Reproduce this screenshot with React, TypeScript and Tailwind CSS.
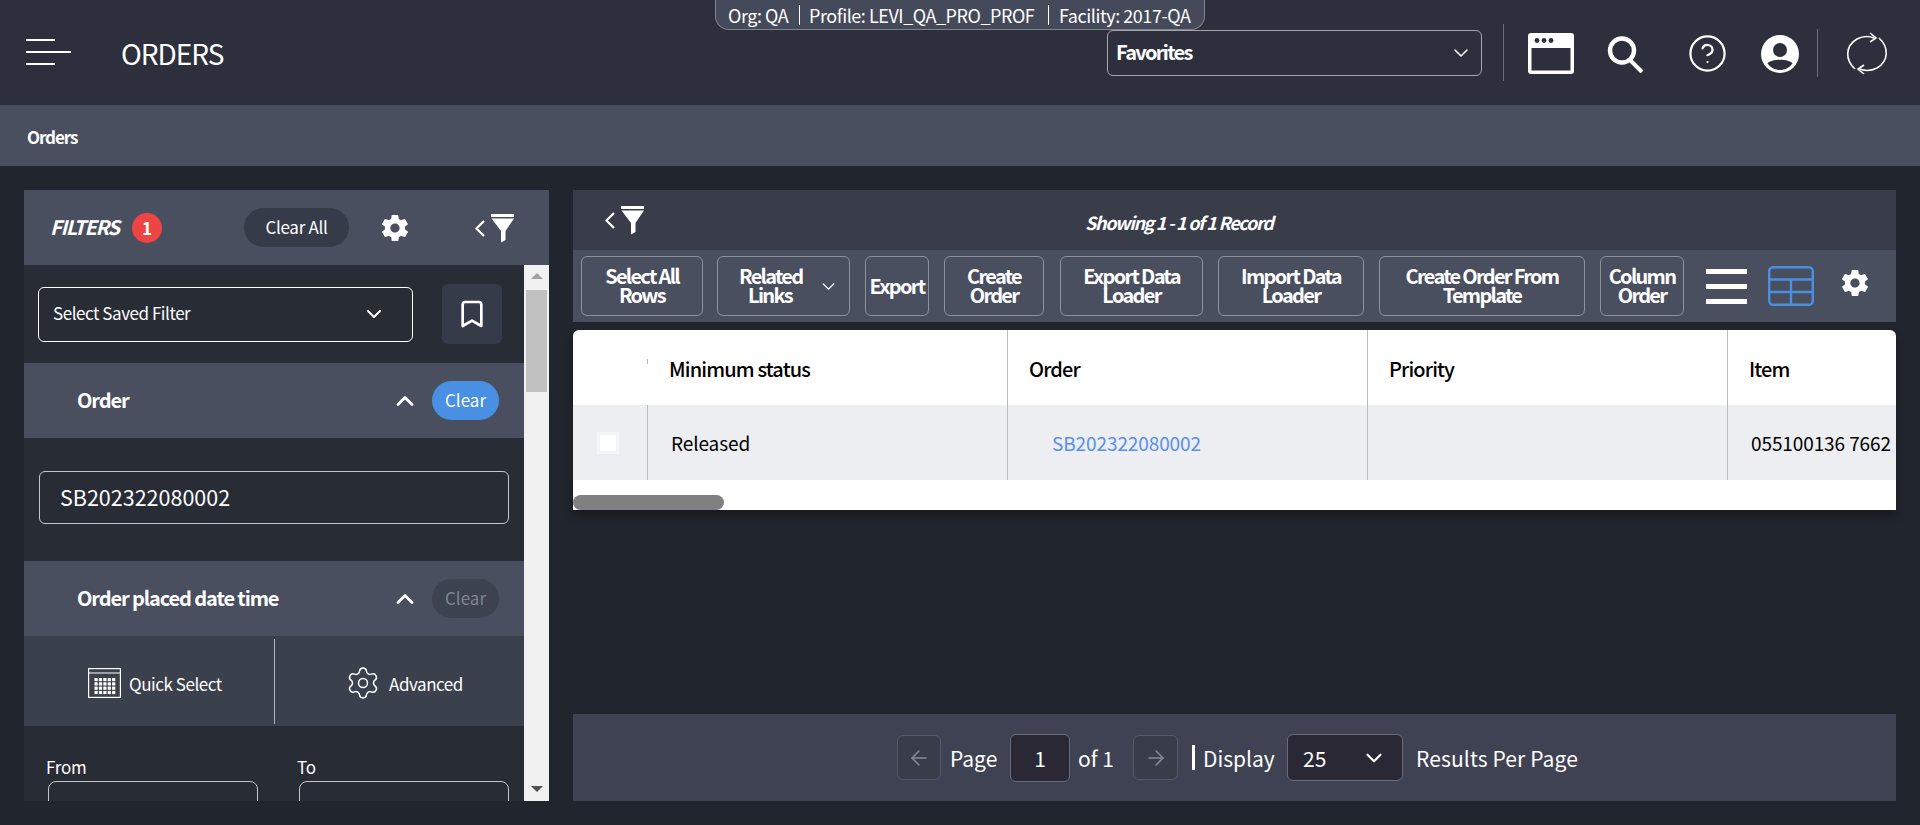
import React from "react";
import { Bookmark, ChevronDown, ChevronUp, ArrowLeft, ArrowRight, Settings, HelpCircle } from "lucide-react";
import { IoMdSettings } from "react-icons/io";

function FilterToggle() {
  return (
    <svg width="42" height="30" viewBox="0 0 42 30" fill="none" className="block">
      <path d="M11 8 L3.5 15.5 L11 23" stroke="white" strokeWidth="2.2" />
      <rect x="18" y="1" width="23" height="3" fill="white" />
      <path d="M18.5 5.5 H41 L32.5 18 V27 L28 29.5 V18 Z" fill="white" />
    </svg>
  );
}

function ToolButton({ w, children }: { w: string; children: React.ReactNode }) {
  return (
    <button className={`${w} h-[60px] shrink-0 rounded-[6px] border border-[#8e929c] bg-[#4a4f60] text-[20px] leading-[19px] font-bold text-white tracking-[-1.7px] flex items-center justify-center text-center pb-[2px]`}>
      <span>{children}</span>
    </button>
  );
}

function SectionHead({ title, active }: { title: string; active?: boolean }) {
  return (
    <div className="h-[75px] bg-[#4a4f5f] flex items-center pl-[53px] pr-[25px] shrink-0">
      <span className="text-[20px] leading-[28px] pb-[2px] font-bold text-white tracking-[-1.1px] flex-1">{title}</span>
      <ChevronUp size={28} strokeWidth={2.4} className="text-white mr-[13px]" />
      <span className={active
        ? "w-[67px] h-[39px] rounded-full bg-[#4a90e2] text-white text-[17px] pb-[2px] flex items-center justify-center"
        : "w-[67px] h-[39px] rounded-full bg-[#3c424f] text-[#7f8591] text-[17px] pb-[2px] flex items-center justify-center"}>
        Clear
      </span>
    </div>
  );
}

function HeaderCell({ w, pl, children, border = true }: { w: string; pl: string; children?: React.ReactNode; border?: boolean }) {
  return (
    <div className={`${w} ${pl} ${border ? "border-r border-[#b9bcc0]" : ""} h-full shrink-0 flex items-center`}>
      {children}
    </div>
  );
}

export default function App() {
  return (
    <div className="relative w-[1920px] h-[825px] overflow-hidden bg-[#21252d] text-white font-['Noto_Sans_CJK_JP','Noto_Sans',sans-serif]">
      <div className="absolute left-[715px] top-0 w-[490px] h-[30px] rounded-b-[14px] bg-[#454a5a] border border-t-0 border-[#80848f] flex items-center pl-[12px] text-[18px] leading-[24px] tracking-[-0.45px] whitespace-nowrap">
        <span className="w-[71px]">Org: QA</span>
        <span className="w-px h-[20px] bg-white" />
        <span className="pl-[9px] w-[248px]">Profile: LEVI_QA_PRO_PROF</span>
        <span className="w-px h-[20px] bg-white" />
        <span className="pl-[10px]">Facility: 2017-QA</span>
      </div>

      <header className="h-[105px] bg-[#2d303c] flex items-start">
        <div className="ml-[26px] mt-[39px] w-[45px] flex flex-col gap-[10px]">
          <div className="w-[29px] h-[2px] bg-white" />
          <div className="w-[45px] h-[2px] bg-white" />
          <div className="w-[29px] h-[2px] bg-white" />
        </div>
        <div className="ml-[50px] mt-[34px] text-[28px] leading-[38px] tracking-[-1px]">ORDERS</div>
        <div className="ml-[auto] mt-[30px] w-[375px] h-[46px] rounded-[6px] border border-[#a3a6ae] flex items-center pl-[8px] pr-[8px]">
          <span className="text-[20px] leading-[28px] pb-[2px] font-bold flex-1 tracking-[-1.7px]">Favorites</span>
          <ChevronDown size={24} strokeWidth={1.5} />
        </div>
        <div className="ml-[21px] mt-[24px] w-px h-[57px] bg-[#6a6e78]" />
        <svg className="ml-[24px] mt-[33px]" width="46" height="41" viewBox="0 0 46 41">
          <rect x="0" y="0" width="46" height="41" rx="3" fill="white" />
          <rect x="3.5" y="15" width="39" height="22.5" fill="#2d303c" />
          <circle cx="9" cy="7.5" r="2.4" fill="#2d303c" />
          <circle cx="16" cy="7.5" r="2.4" fill="#2d303c" />
          <circle cx="23" cy="7.5" r="2.4" fill="#2d303c" />
        </svg>
        <svg className="ml-[33px] mt-[36px]" width="38" height="37" viewBox="0 0 38 37" fill="none">
          <circle cx="15" cy="14.5" r="12" stroke="white" strokeWidth="4.4" />
          <path d="M23 24 L35 36" stroke="white" strokeWidth="4" />
        </svg>
        <HelpCircle className="ml-[42px] mt-[33px]" size={41} strokeWidth={1.3} color="white" />
        <svg className="ml-[33px] mt-[35px]" width="38" height="38" viewBox="0 0 38 38">
          <circle cx="19" cy="19" r="19" fill="white" />
          <circle cx="19" cy="15" r="7" fill="#2d303c" />
          <path d="M6.5 28.5 C10 23.5 28 23.5 31.5 28.5 C28 33 23.5 35 19 35 C14.5 35 10 33 6.5 28.5Z" fill="#2d303c" />
        </svg>
        <div className="ml-[18px] mt-[29px] w-px h-[48px] bg-[#6a6e78]" />
        <svg className="ml-[28px] mt-[32px]" width="42" height="43" viewBox="0 0 42 43" fill="none" stroke="white" strokeWidth="1.6">
          <path d="M9 37 C-1 28 -1 14 11 7 C17 4 23 4 28 6" />
          <path d="M33 6 C43 15 43 29 31 36 C25 39 19 39 14 37" />
          <path d="M24 1 L30 6 L24 10" />
          <path d="M18 33 L12 37 L18 42" />
        </svg>
        <div className="w-[32px] shrink-0" />
      </header>

      <div className="h-[61px] bg-[#4a4f5f] flex items-center pl-[27px] text-[17px] leading-[24px] pt-[2px] font-bold tracking-[-1.1px]">Orders</div>

      <main className="flex pt-[24px] pl-[24px] gap-[24px]">
        <aside className="w-[525px] h-[611px] shrink-0 flex flex-col bg-[#282c35] overflow-hidden">
          <div className="h-[75px] bg-[#4a4f5f] flex items-center shrink-0">
            <span className="ml-[26px] w-[70px] text-[20px] font-bold italic tracking-[-1.3px] whitespace-nowrap pb-[2px]">FILTERS</span>
            <span className="ml-[12px] w-[30px] h-[30px] rounded-full bg-[#ef4444] flex items-center justify-center text-[17px] font-bold">1</span>
            <span className="ml-[82px] w-[105px] h-[39px] rounded-full bg-[#353b48] flex items-center justify-center text-[17px] tracking-[-0.3px] pb-[2px]">Clear All</span>
            <IoMdSettings className="ml-[30px]" size={32} color="white" />
            <div className="ml-[62px]"><FilterToggle /></div>
          </div>
          <div className="flex flex-1 min-h-0">
            <div className="w-[500px] overflow-hidden">
              <div className="h-[98px] flex items-center pl-[14px]">
                <div className="w-[375px] h-[55px] rounded-[6px] border border-white flex items-center pl-[14px] pr-[26px]">
                  <span className="text-[17px] leading-[24px] pb-[2px] tracking-[-0.45px] flex-1">Select Saved Filter</span>
                  <ChevronDown size={24} strokeWidth={2} />
                </div>
                <div className="ml-[29px] w-[60px] h-[60px] rounded-[6px] bg-[#353b48] flex items-center justify-center">
                  <Bookmark size={32} strokeWidth={2} />
                </div>
              </div>
              <SectionHead title="Order" active />
              <div className="h-[123px] pl-[15px] pt-[33px]">
                <div className="w-[470px] h-[53px] rounded-[6px] border border-[#c4c6ca] flex items-center pl-[20px] text-[21.5px]">SB202322080002</div>
              </div>
              <SectionHead title="Order placed date time" />
              <div className="h-[90px] bg-[#3a404c] flex items-center">
                <div className="w-[250px] pt-[6px] pl-[64px] flex items-center gap-[8px] text-[17px] tracking-[-0.45px] whitespace-nowrap">
                  <svg width="33" height="30" viewBox="0 0 33 30" fill="none" stroke="white" strokeWidth="1.2" className="shrink-0 -mt-[2px]">
                    <rect x="0.6" y="0.6" width="31.8" height="28.8" />
                    <path d="M0.6 5 H32.4" />
                    <g fill="white" stroke="none">
                      {[0, 1, 2, 3].map((r) =>
                        [0, 1, 2, 3, 4].map((c) => (
                          <rect key={`${r}-${c}`} x={6.5 + c * 4.4} y={10 + r * 4.3} width="3.2" height="3.2" />
                        ))
                      )}
                    </g>
                  </svg>
                  Quick Select
                </div>
                <div className="w-px h-[85px] bg-[#b0b3b9]" />
                <div className="w-[249px] pt-[6px] pl-[70px] flex items-center gap-[8px] text-[17px] tracking-[-0.45px]">
                  <Settings size={36} strokeWidth={1} className="shrink-0 -mt-[2px]" />
                  Advanced
                </div>
              </div>
              <div className="grid grid-cols-[250px_209px] pt-[30px]">
                <div className="text-[17px] leading-[22px] pl-[22px] tracking-[-0.2px]">From</div>
                <div className="text-[17px] leading-[22px] pl-[23px] tracking-[-0.2px]">To</div>
              </div>
              <div className="flex pl-[24px] gap-[41px] mt-[3px]">
                <div className="w-[210px] h-[60px] rounded-[8px] border border-[#c4c6ca] flex items-center justify-center text-[18px] pb-[6px] text-[#c9ccd2]">mm/dd/yyyy</div>
                <div className="w-[210px] h-[60px] rounded-[8px] border border-[#c4c6ca] flex items-center justify-center text-[18px] pb-[6px] text-[#c9ccd2]">mm/dd/yyyy</div>
              </div>
            </div>
            <div className="w-[25px] bg-[#f1f1f1] flex flex-col items-center relative">
              <div className="mt-[8px] w-0 h-0 border-x-[6px] border-x-transparent border-b-[6px] border-b-[#a3a3a3]" />
              <div className="mt-[11px] w-[21px] h-[102px] bg-[#c1c1c1]" />
              <div className="mt-auto mb-[9px] w-0 h-0 border-x-[6px] border-x-transparent border-t-[6px] border-t-[#505050]" />
            </div>
          </div>
        </aside>

        <section className="w-[1323px] h-[611px] shrink-0 flex flex-col">
          <div className="h-[60px] bg-[#393c49] flex items-center relative shrink-0">
            <div className="ml-[30px]"><FilterToggle /></div>
            <span className="absolute left-[512px] top-[19px] text-[18px] leading-[26px] font-bold italic tracking-[-1.3px] whitespace-nowrap">Showing 1 - 1 of 1 Record</span>
          </div>
          <div className="h-[72px] bg-[#4a4f60] flex items-start pt-[6px] pl-[8px] shrink-0">
            <ToolButton w="w-[122px]">Select All<br />Rows</ToolButton>
            <div className="ml-[14px]">
              <button className="w-[133px] h-[60px] rounded-[6px] border border-[#8e929c] text-[20px] leading-[19px] font-bold tracking-[-1.7px] flex items-center pl-[21px] pb-[2px] text-center">
                <span className="w-[62px]">Related<br />Links</span>
                <ChevronDown size={21} strokeWidth={1.6} className="ml-[17px] mt-[2px]" />
              </button>
            </div>
            <div className="ml-[15px]"><ToolButton w="w-[64px]">Export</ToolButton></div>
            <div className="ml-[15px]"><ToolButton w="w-[100px]">Create<br />Order</ToolButton></div>
            <div className="ml-[16px]"><ToolButton w="w-[143px]">Export Data<br />Loader</ToolButton></div>
            <div className="ml-[15px]"><ToolButton w="w-[146px]">Import Data<br />Loader</ToolButton></div>
            <div className="ml-[15px]"><ToolButton w="w-[206px]">Create Order From<br />Template</ToolButton></div>
            <div className="ml-[15px]"><ToolButton w="w-[84px]">Column<br />Order</ToolButton></div>
            <div className="ml-[22px] mt-[13px] w-[41px] flex flex-col gap-[10px]">
              <div className="h-[5px] bg-white" />
              <div className="h-[5px] bg-white" />
              <div className="h-[5px] bg-white" />
            </div>
            <svg className="ml-[21px] mt-[10px]" width="46" height="40" viewBox="0 0 46 40" fill="none" stroke="#4a90e2" strokeWidth="2.4">
              <rect x="1.2" y="1.2" width="43.6" height="37.6" rx="4" />
              <path d="M1.2 13.5 H44.8 M1.2 26 H44.8 M23 13.5 V38.8" />
            </svg>
            <IoMdSettings className="ml-[25px] mt-[11px]" size={32} color="white" />
          </div>
          <div className="h-[8px] shrink-0" />
          <div className="h-[180px] bg-white rounded-t-[6px] relative shrink-0 text-black overflow-hidden shadow-[0_6px_10px_rgba(0,0,0,0.3)]">
            <div className="h-[75px] flex text-[20px] tracking-[-0.85px] font-medium">
              <div className="w-[75px] h-full flex items-center justify-end"><div className="w-px h-[5px] bg-[#b9bcc0] -mt-[12px]" /></div>
              <HeaderCell w="w-[360px]" pl="pl-[21px] pt-[2px]">Minimum status</HeaderCell>
              <HeaderCell w="w-[360px]" pl="pl-[21px] pt-[2px]">Order</HeaderCell>
              <HeaderCell w="w-[360px]" pl="pl-[21px] pt-[2px]">Priority</HeaderCell>
              <HeaderCell w="w-[168px]" pl="pl-[21px] pt-[2px]" border={false}>Item</HeaderCell>
            </div>
            <div className="h-[75px] flex bg-[#eceef2] text-[19px] tracking-[-0.1px]">
              <div className="w-[75px] h-full border-r border-[#b9bcc0] flex items-center pl-[24px]">
                <div className="w-[22px] h-[22px] bg-white border-[3px] border-[#f4f5f7]" />
              </div>
              <HeaderCell w="w-[360px]" pl="pl-[23px] pt-[1px]">Released</HeaderCell>
              <HeaderCell w="w-[360px]" pl="pl-[44px] pt-[1px]"><span className="text-[#5a8ff0]">SB202322080002</span></HeaderCell>
              <HeaderCell w="w-[360px]" pl="pl-[22px]" />
              <HeaderCell w="w-[168px]" pl="pl-[23px] pt-[1px]" border={false}><span className="whitespace-nowrap">055100136 7662</span></HeaderCell>
            </div>
            <div className="h-[30px] flex items-end">
              <div className="w-[151px] h-[15px] rounded-full bg-[#808080]" />
            </div>
          </div>
          <div className="mt-auto h-[87px] bg-[#3e4252] flex items-center text-[21px] leading-[28px] shrink-0 pl-[324px]">
            <button className="w-[44px] h-[45px] rounded-[6px] border border-[#555a68] bg-[#393c49] flex items-center justify-center text-[#868a94]">
              <ArrowLeft size={24} strokeWidth={1.6} />
            </button>
            <span className="ml-[9px] w-[49px]">Page</span>
            <div className="ml-[11px] w-[60px] h-[48px] rounded-[6px] border border-[#6b6e78] bg-[#2a2835] flex items-center justify-center">1</div>
            <span className="ml-[8px] w-[44px]">of 1</span>
            <button className="ml-[11px] w-[45px] h-[45px] rounded-[6px] border border-[#555a68] bg-[#393c49] flex items-center justify-center text-[#868a94]">
              <ArrowRight size={24} strokeWidth={1.6} />
            </button>
            <div className="ml-[14px] w-[3px] h-[25px] bg-white" />
            <span className="ml-[8px] w-[74px]">Display</span>
            <div className="ml-[10px] w-[116px] h-[47px] rounded-[6px] border border-[#6b6e78] bg-[#2a2835] flex items-center pl-[15px] pr-[15px]">
              <span className="flex-1">25</span>
              <ChevronDown size={26} strokeWidth={2} />
            </div>
            <span className="ml-[13px] whitespace-nowrap tracking-[0.12px]">Results Per Page</span>
          </div>
        </section>
      </main>
    </div>
  );
}
